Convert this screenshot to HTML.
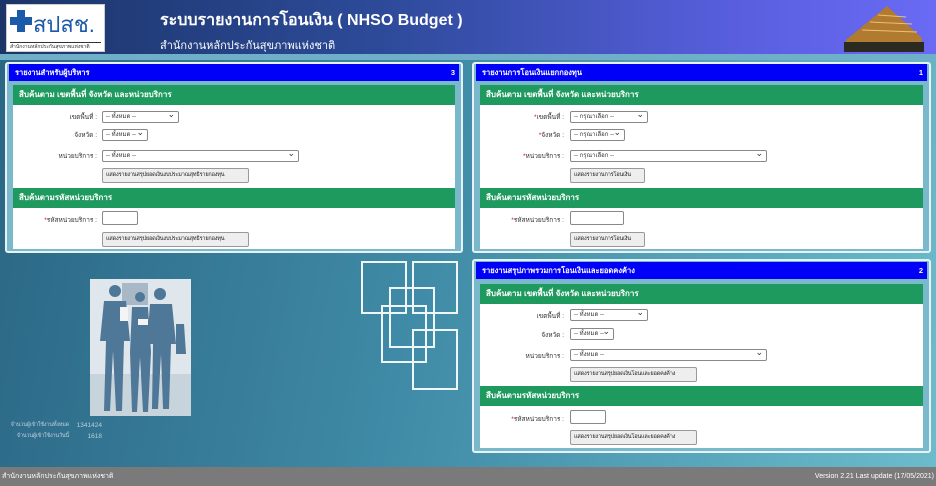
<!DOCTYPE html>
<html><head><meta charset="utf-8"><style>
*{margin:0;padding:0;box-sizing:border-box}
body{width:936px;height:486px;overflow:hidden;position:relative;font-family:"Liberation Sans","Noto Sans CJK SC",sans-serif;font-size:8px;background:linear-gradient(100deg,#2a6684 0%,#3f8aa6 45%,#6cbccc 100%)}
.hdr{position:absolute;left:0;top:0;width:936px;height:55px;background:linear-gradient(90deg,#1c3568 0%,#2c4a98 40%,#5a5fe0 80%,#6a6af4 100%)}
.logo{position:absolute;left:6px;top:4px;width:99px;height:48px;background:#fff;border:1px solid #ccc}
.t1{position:absolute;left:160px;top:8px;color:#fff;font-size:16px;font-weight:bold}
.t2{position:absolute;left:160px;top:36px;color:#fff;font-size:11px}
.strip{position:absolute;left:0;top:54px;width:936px;height:6px;background:#6fb0c8}
.pn{position:absolute;border:2px solid #e8f2f6;border-radius:3px;background:#7ab8cc}
.bb{position:absolute;left:2px;right:2px;height:17px;background:#0000f8;color:#fff;font-weight:bold;font-size:7.5px;line-height:17px;padding:0 6px;white-space:nowrap}
.bb span{position:absolute;right:4px}
.gb{position:absolute;left:6px;right:6px;height:20px;background:#1e9a5e;color:#fff;font-weight:bold;font-size:8px;line-height:20px;padding:0 6px;white-space:nowrap}
.wh{position:absolute;left:6px;right:6px;background:#fff}
.lb{position:absolute;font-size:6.5px;color:#333;text-align:right;width:90px;white-space:nowrap}
.lb i{color:#e00;font-style:normal}
.sel{position:absolute;height:12px;border:1px solid #888;border-radius:2px;background:#fff;font-size:6px;line-height:10px;padding-left:3px;color:#333;white-space:nowrap;overflow:hidden}
.sel:after{content:"⌄";position:absolute;right:3px;top:-3px;font-size:9px}
.btn{position:absolute;height:15px;border:1px solid #999;border-radius:2px;background:#eee;font-size:5.6px;letter-spacing:-0.2px;line-height:13px;padding:0 3px;color:#222;white-space:nowrap;overflow:hidden}
.inp{position:absolute;height:14px;border:1px solid #888;border-radius:2px;background:#fff}
.ft{position:absolute;left:0;top:467px;width:936px;height:19px;background:#7a7a7a;color:#fff;font-size:7px;line-height:19px;white-space:nowrap}
.sq{position:absolute;border:2px solid #eef6f8}
</style></head><body>
<div class="hdr"></div>
<div class="logo"><svg style="position:absolute;left:3px;top:5px" width="22" height="22"><path d="M7 0h8v7h7v8h-7v7h-8v-7h-7v-8h7z" fill="#1a5aa8"/></svg><div style="position:absolute;left:26px;top:2px;font-size:22px;color:#1a5aa8">สปสช.</div><div style="position:absolute;left:3px;top:37px;font-size:5px;color:#333;border-top:1px solid #333;width:91px;white-space:nowrap;overflow:hidden">สำนักงานหลักประกันสุขภาพแห่งชาติ</div></div>
<div class="t1">ระบบรายงานการโอนเงิน ( NHSO Budget )</div>
<div class="t2">สำนักงานหลักประกันสุขภาพแห่งชาติ</div>
<svg style="position:absolute;left:832px;top:2px" width="95" height="52"><polygon points="14,38 55,4 90,36 88,48 12,48" fill="#b07a30"/><g stroke="#f0c070" stroke-width="1"><line x1="30" y1="28" x2="85" y2="30"/><line x1="38" y1="20" x2="80" y2="22"/><line x1="46" y1="13" x2="74" y2="15"/></g><rect x="12" y="40" width="80" height="10" fill="#2a2a20"/></svg>
<div class="strip"></div>

<div class="pn" style="left:5px;top:62px;width:458px;height:191px">
<div class="bb" style="top:0">รายงานสำหรับผู้บริหาร<span>3</span></div>
<div class="gb" style="top:21px">สืบค้นตาม เขตพื้นที่ จังหวัด และหน่วยบริการ</div>
<div class="wh" style="top:41px;height:83px"></div>
<div class="gb" style="top:124px">สืบค้นตามรหัสหน่วยบริการ</div>
<div class="wh" style="top:144px;height:41px"></div>
<div class="lb" style="left:0;top:48px">เขตพื้นที่ :</div><div class="sel" style="left:95px;top:47px;width:77px">-- ทั้งหมด --</div>
<div class="lb" style="left:0;top:66px">จังหวัด :</div><div class="sel" style="left:95px;top:65px;width:46px">-- ทั้งหมด --</div>
<div class="lb" style="left:0;top:87px">หน่วยบริการ :</div><div class="sel" style="left:95px;top:86px;width:197px">-- ทั้งหมด --</div>
<div class="btn" style="left:95px;top:104px;width:147px">แสดงรายงานสรุปยอดเงินงบประมาณสุทธิรายกองทุน</div>
<div class="lb" style="left:0;top:151px"><i>*</i>รหัสหน่วยบริการ :</div><div class="inp" style="left:95px;top:147px;width:36px"></div>
<div class="btn" style="left:95px;top:168px;width:147px">แสดงรายงานสรุปยอดเงินงบประมาณสุทธิรายกองทุน</div>
</div>

<div class="pn" style="left:472px;top:62px;width:459px;height:191px">
<div class="bb" style="top:0">รายงานการโอนเงินแยกกองทุน<span>1</span></div>
<div class="gb" style="top:21px">สืบค้นตาม เขตพื้นที่ จังหวัด และหน่วยบริการ</div>
<div class="wh" style="top:41px;height:83px"></div>
<div class="gb" style="top:124px">สืบค้นตามรหัสหน่วยบริการ</div>
<div class="wh" style="top:144px;height:41px"></div>
<div class="lb" style="left:0;top:48px"><i>*</i>เขตพื้นที่ :</div><div class="sel" style="left:96px;top:47px;width:78px">-- กรุณาเลือก --</div>
<div class="lb" style="left:0;top:66px"><i>*</i>จังหวัด :</div><div class="sel" style="left:96px;top:65px;width:55px">-- กรุณาเลือก --</div>
<div class="lb" style="left:0;top:87px"><i>*</i>หน่วยบริการ :</div><div class="sel" style="left:96px;top:86px;width:197px">-- กรุณาเลือก --</div>
<div class="btn" style="left:96px;top:104px;width:75px">แสดงรายงานการโอนเงิน</div>
<div class="lb" style="left:0;top:151px"><i>*</i>รหัสหน่วยบริการ :</div><div class="inp" style="left:96px;top:147px;width:54px"></div>
<div class="btn" style="left:96px;top:168px;width:75px">แสดงรายงานการโอนเงิน</div>
</div>

<div class="pn" style="left:472px;top:259px;width:459px;height:194px">
<div class="bb" style="top:1px">รายงานสรุปภาพรวมการโอนเงินและยอดคงค้าง<span>2</span></div>
<div class="gb" style="top:23px">สืบค้นตาม เขตพื้นที่ จังหวัด และหน่วยบริการ</div>
<div class="wh" style="top:43px;height:82px"></div>
<div class="gb" style="top:125px">สืบค้นตามรหัสหน่วยบริการ</div>
<div class="wh" style="top:145px;height:42px"></div>
<div class="lb" style="left:0;top:50px">เขตพื้นที่ :</div><div class="sel" style="left:96px;top:48px;width:78px">-- ทั้งหมด --</div>
<div class="lb" style="left:0;top:69px">จังหวัด :</div><div class="sel" style="left:96px;top:67px;width:44px">-- ทั้งหมด --</div>
<div class="lb" style="left:0;top:90px">หน่วยบริการ :</div><div class="sel" style="left:96px;top:88px;width:197px">-- ทั้งหมด --</div>
<div class="btn" style="left:96px;top:106px;width:127px">แสดงรายงานสรุปยอดเงินโอนและยอดคงค้าง</div>
<div class="lb" style="left:0;top:153px"><i>*</i>รหัสหน่วยบริการ :</div><div class="inp" style="left:96px;top:149px;width:36px"></div>
<div class="btn" style="left:96px;top:169px;width:127px">แสดงรายงานสรุปยอดเงินโอนและยอดคงค้าง</div>
</div>

<div class="sq" style="left:361px;top:261px;width:46px;height:53px"></div>
<div class="sq" style="left:412px;top:261px;width:46px;height:53px"></div>
<div class="sq" style="left:389px;top:287px;width:46px;height:61px"></div>
<div class="sq" style="left:381px;top:305px;width:46px;height:58px"></div>
<div class="sq" style="left:412px;top:329px;width:46px;height:61px"></div>

<svg style="position:absolute;left:90px;top:279px" width="101" height="137"><rect width="101" height="137" fill="#dfe6ec"/><rect x="0" y="95" width="101" height="42" fill="#c8d4dc"/><rect x="32" y="4" width="26" height="22" fill="#a9b8c6"/><g fill="#4f7798"><circle cx="25" cy="12" r="6"/><path d="M14 22h22l4 40-6 0-2 70h-6l-3-60-3 60h-6l2-70-6 0z"/><circle cx="50" cy="18" r="5"/><path d="M42 28h16l3 45-3 60h-5l-3-55-3 55h-5l-2-60z"/><circle cx="70" cy="15" r="6"/><path d="M60 25h22l4 40-5 0-2 65h-6l-2-55-3 55h-6l1-65-6 0z"/><path d="M86 45h8l2 30h-10z"/></g><rect x="30" y="28" width="8" height="14" fill="#f4f4f4"/><rect x="48" y="40" width="10" height="6" fill="#f4f4f4"/></svg>

<div style="position:absolute;left:0px;top:420px;color:#bcd;font-size:5.5px;line-height:11px;text-align:right;width:69px;white-space:nowrap;letter-spacing:-0.2px">จำนวนผู้เข้าใช้งานทั้งหมด<br>จำนวนผู้เข้าใช้งานวันนี้</div>
<div style="position:absolute;left:72px;top:420px;color:#bcd;font-size:6.5px;line-height:11px;text-align:right;width:30px">1341424<br>1618</div>

<div class="ft"><span style="position:absolute;left:2px">สำนักงานหลักประกันสุขภาพแห่งชาติ</span><span style="position:absolute;right:2px">Version 2.21 Last update (17/05/2021)</span></div>
</body></html>
